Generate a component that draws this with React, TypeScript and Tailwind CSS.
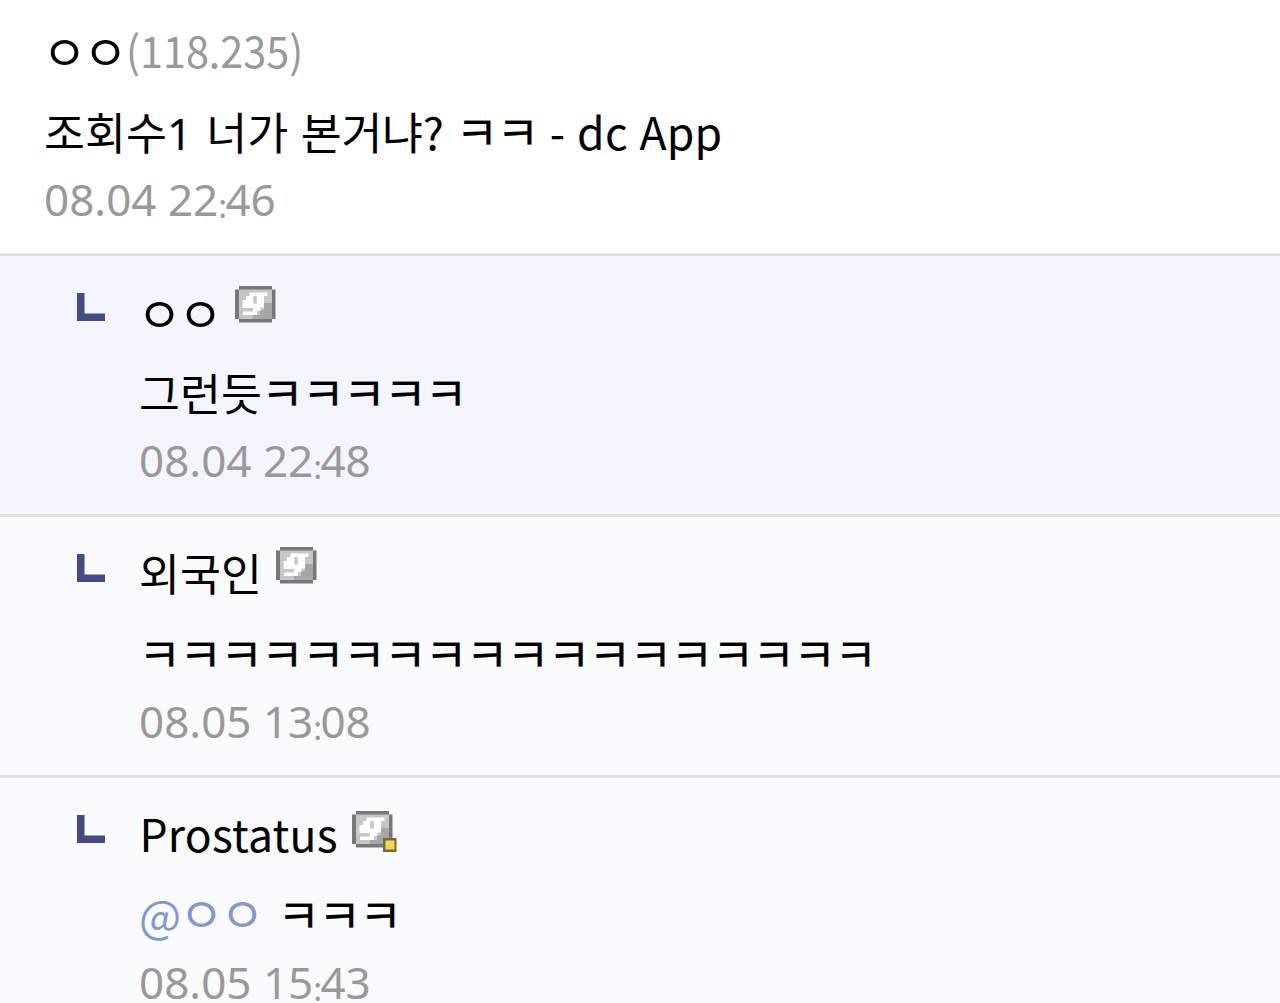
import type { ReactNode } from "react";

const Ieung = ({ inBody }: { inBody?: boolean }) => (
    <span
        className={`-ml-[2px] mr-[2px] text-[49px] leading-none tracking-[-4.1px] ${
            inBody ? "align-[0px]" : "align-[-3px]"
        }`}
    >
        ㅇㅇ
    </span>
);

const Laugh = ({ children }: { children: string }) => (
    <span className="-ml-[1px] mr-[1px] text-[47px] leading-none tracking-[-2.3px] [-webkit-text-stroke:0.15px_black]">
        {children}
    </span>
);

const Time = ({ day, hour, minute }: { day: string; hour: string; minute: string }) => (
    <div className="h-16 font-['Noto_Sans',sans-serif] text-[44px] leading-[64px] text-[#999]">
        {day} {hour}
        <span className="align-[-2px] text-[33px] leading-none tracking-[-1.7px]">:</span>
        {minute}
    </div>
);

const ReplyMark = () => (
    <svg className="mt-[37px] h-7 w-[28px] shrink-0" viewBox="0 0 28 28" fill="#434a87">
        <path d="M0 0h7.5v20.5H28V28H0z" />
    </svg>
);

const Badge = ({ fixed }: { fixed?: boolean }) => (
    <svg
        className={`h-[41px] w-[45px] shrink-0 ${
            fixed ? "ml-[14px] mt-[10px]" : "ml-[14px] mt-[7px]"
        }`}
        viewBox="0 0 45 41"
    >
        <path d="M4 0h33v3.5h3.5V33H37v3.500H4V33H0V3.500h4z" fill="#777879" />
        <path d="M4 3.500h33V33H4z" fill="#c6c6c6" />
        <path d="M29 17h8v16H18v-4h7v-5h4z" fill="#a6a6a6" />
        <path
            d="M14.500 6.500h18V10H29v11.500h-3.500V25H22v4H8v-3.500h10V22H7.500v-8H11v-4h3.500zM18.300 10v7.500h3.500V10z"
            fill="#fff"
            fillRule="evenodd"
        />
        {fixed && (
            <>
                <path d="M31 27h13.500v14H31z" fill="#746a3c" />
                <path d="M33.500 29.500h9v9h-9z" fill="#f5d94a" />
            </>
        )}
    </svg>
);

type ReplyProps = {
    name: ReactNode;
    fixed?: boolean;
    mine?: boolean;
    time: ReactNode;
    children: ReactNode;
};

const Reply = ({ name, fixed, mine, time, children }: ReplyProps) => (
    <div
        className={`flex h-[261px] shrink-0 border-b-[3px] border-[#e1e2ea] pl-[77px] ${
            mine ? "bg-[#f3f6ff]" : "bg-[#fafbfd]"
        }`}
    >
        <ReplyMark />
        <div className="ml-[34px] pt-[23px]">
            <div className="flex h-16 leading-[64px]">
                <span className={fixed ? "ml-[0.5px] tracking-[0.2px]" : ""}>{name}</span>
                <Badge fixed={fixed} />
            </div>
            <div className="mt-[17px] h-[68px] leading-[64px]">{children}</div>
            {time}
        </div>
    </div>
);

const App = () => {
    return (
        <div className="flex h-[1003px] w-full flex-col overflow-hidden bg-white font-['Noto_Sans_CJK_KR',sans-serif] text-[44.5px] whitespace-pre text-black">
            <div className="h-[256px] shrink-0 border-b-[3px] border-[#e1e2ea] pt-[17px] pl-11">
                <div className="h-16 leading-[64px]">
                    <Ieung />
                    <span className="inline-block origin-left scale-x-[0.94] text-[44px] text-[#999]">
                        (118.235)
                    </span>
                </div>
                <div className="mt-[18px] h-[68px] leading-[64px] [word-spacing:3px]">
                    조회수<span className="mr-[1px] font-['Noto_Sans',sans-serif] leading-none">1</span> 너가
                    <span className="tracking-[-0.3px]">{" 본거냐? "}</span>
                    <Laugh>ㅋㅋ</Laugh>
                    <span className="tracking-[0.2px] [word-spacing:1.5px]"> - dc App</span>
                </div>
                <Time day="08.04" hour="22" minute="46" />
            </div>

            <Reply mine name={<Ieung />} time={<Time day="08.04" hour="22" minute="48" />}>
                그런듯<Laugh>ㅋㅋㅋㅋㅋ</Laugh>
            </Reply>
            <Reply name="외국인" time={<Time day="08.05" hour="13" minute="08" />}>
                <Laugh>ㅋㅋㅋㅋㅋㅋㅋㅋㅋㅋㅋㅋㅋㅋㅋㅋㅋㅋ</Laugh>
            </Reply>
            <Reply fixed name="Prostatus" time={<Time day="08.05" hour="15" minute="43" />}>
                <span className="mr-[15px] text-[#7f9acb]">
                    @<Ieung inBody />
                </span>
                <Laugh>ㅋㅋㅋ</Laugh>
            </Reply>
        </div>
    );
};

export default App;
